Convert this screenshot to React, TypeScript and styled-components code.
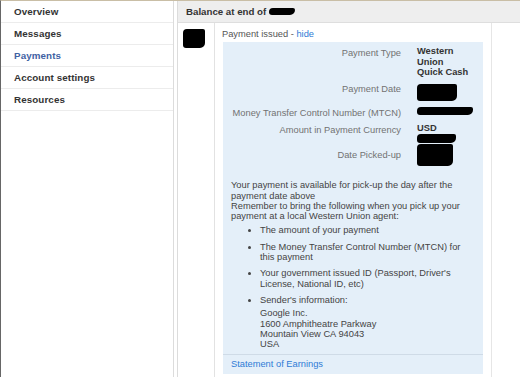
import React from "react";
import styled, { createGlobalStyle } from "styled-components";

const Global = createGlobalStyle`
  html, body { margin: 0; padding: 0; background: #fff; }
  body { font-family: "Liberation Sans", Arial, sans-serif; color: #333; }
  * { box-sizing: border-box; }
`;

const Page = styled.div`
  display: flex;
  height: 377px;
  border-top: 1px solid #c9bea6;
  border-left: 1px solid #666;
  overflow: hidden;
`;

const Sidebar = styled.nav`
  width: 173px;
  flex: none;
  border-right: 1px solid #dcdcdc;
  display: flex;
  flex-direction: column;
`;

const NavItem = styled.div<{ $active?: boolean }>`
  height: 22px;
  display: flex;
  align-items: center;
  padding-left: 13px;
  border-bottom: 1px solid #ececec;
  font-weight: bold;
  font-size: 9.8px;
  letter-spacing: 0.1px;
  color: ${(p) => (p.$active ? "#3f62a3" : "#333")};
`;

const Main = styled.main`
  flex: 1;
  margin-left: 3px;
  border-left: 1px solid #dcdcdc;
  display: flex;
  flex-direction: column;
  min-width: 0;
`;

const Header = styled.div`
  height: 22px;
  flex: none;
  background: #eeeeee;
  border-bottom: 1px solid #dedede;
  display: flex;
  align-items: center;
  gap: 3px;
  padding-left: 8px;
  font-weight: bold;
  font-size: 9.7px;
  color: #333;
`;

const Body = styled.div`
  flex: 1;
  display: flex;
  min-height: 0;
`;

const AvatarCol = styled.div`
  width: 37px;
  flex: none;
  border-right: 1px solid #e2e2e2;
  padding: 6px 0 0 5px;
`;

const Redact = styled.span<{ $w: number; $h: number; $mt?: number }>`
  display: block;
  width: ${(p) => p.$w}px;
  height: ${(p) => p.$h}px;
  margin-top: ${(p) => p.$mt ?? 0}px;
  background: #000;
  border-radius: 4px 2px 5px 3px;
`;

const InlineRedact = styled(Redact)`
  display: inline-block;
  vertical-align: middle;
`;

const Content = styled.div`
  width: 276px;
  flex: none;
  padding: 6px 8px 0 7px;
  font-size: 9.3px;
  line-height: 10.3px;
`;

const RightCol = styled.div`
  flex: 1;
  border-left: 1px solid #e6e6e6;
`;

const Status = styled.div`
  color: #555;
  margin-bottom: 3px;
`;

const Link = styled.a`
  color: #2f7bd6;
  text-decoration: none;
`;

const Box = styled.div`
  margin-left: 1px;
  background: #e4eff9;
  display: flex;
  flex-direction: column;
`;

const Details = styled.div`
  display: grid;
  grid-template-columns: 1fr 53px;
  column-gap: 16px;
  row-gap: 5.5px;
  padding: 4px 13px 0 8px;
`;

const Label = styled.div`
  text-align: right;
  color: #727272;
  padding-top: 1.5px;
`;

const Value = styled.div`
  font-weight: bold;
  color: #333;
  min-height: 10.3px;
`;

const Notice = styled.div`
  padding: 14px 8px 0 8px;
  color: #444;
`;

const List = styled.ul`
  margin: 4px 0 0 0;
  padding-left: 29px;
`;

const Item = styled.li`
  margin-bottom: 6px;
  &:last-child {
    margin-bottom: 5px;
  }
`;

const Address = styled.div`
  margin-top: 3px;
`;

const Footer = styled.div`
  border-top: 1px solid #cfdbe7;
  padding: 4px 8px 4px 8px;
`;

export default function App() {
  return (
    <>
      <Global />
      <Page>
        <Sidebar>
          <NavItem>Overview</NavItem>
          <NavItem>Messages</NavItem>
          <NavItem $active>Payments</NavItem>
          <NavItem>Account settings</NavItem>
          <NavItem>Resources</NavItem>
        </Sidebar>
        <Main>
          <Header>
            Balance at end of <InlineRedact $w={26} $h={7} />
          </Header>
          <Body>
            <AvatarCol>
              <Redact $w={22} $h={19} />
            </AvatarCol>
            <Content>
              <Status>
                Payment issued - <Link href="#">hide</Link>
              </Status>
              <Box>
                <Details>
                  <Label>Payment Type</Label>
                  <Value>Western Union Quick Cash</Value>
                  <Label>Payment Date</Label>
                  <Value>
                    <Redact $w={40} $h={17} $mt={1} />
                  </Value>
                  <Label>Money Transfer Control Number (MTCN)</Label>
                  <Value>
                    <Redact $w={56} $h={8} $mt={1} />
                  </Value>
                  <Label>Amount in Payment Currency</Label>
                  <Value>
                    USD
                    <Redact $w={39} $h={9} $mt={0} />
                  </Value>
                  <Label>Date Picked-up</Label>
                  <Value>
                    <Redact $w={36} $h={22} $mt={-4} />
                  </Value>
                </Details>
                <Notice>
                  Your payment is available for pick-up the day after the payment date above
                  <br />
                  Remember to bring the following when you pick up your payment at a local Western Union agent:
                  <List>
                    <Item>The amount of your payment</Item>
                    <Item>The Money Transfer Control Number (MTCN) for this payment</Item>
                    <Item>Your government issued ID (Passport, Driver's License, National ID, etc)</Item>
                    <Item>
                      Sender's information:
                      <Address>
                        Google Inc.
                        <br />
                        1600 Amphitheatre Parkway
                        <br />
                        Mountain View CA 94043
                        <br />
                        USA
                      </Address>
                    </Item>
                  </List>
                </Notice>
                <Footer>
                  <Link href="#">Statement of Earnings</Link>
                </Footer>
              </Box>
            </Content>
            <RightCol />
          </Body>
        </Main>
      </Page>
    </>
  );
}
